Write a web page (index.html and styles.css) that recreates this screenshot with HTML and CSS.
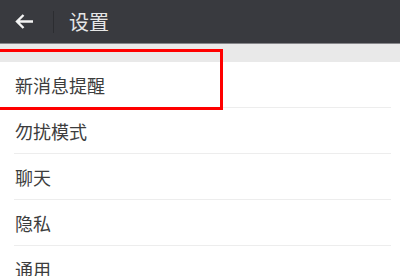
FILE: index.html
```html
<!DOCTYPE html>
<html lang="zh-CN">
<head>
<meta charset="utf-8">
<link rel="stylesheet" href="styles.css">
</head>
<body>
<div class="page">
  <header class="topbar">
    <span class="back">
      <svg width="20" height="17" viewBox="0 0 20 17"><path d="M19 8.5H3M9.5 2L3 8.5l6.5 6.5" fill="none" stroke="#f4f4f4" stroke-width="2.4"/></svg>
    </span>
    <span class="sep"></span>
    <span class="title">设置</span>
  </header>
  <div class="band"></div>
  <ul class="list">
    <li class="row">新消息提醒</li>
    <li class="row">勿扰模式</li>
    <li class="row">聊天</li>
    <li class="row">隐私</li>
    <li class="row">通用</li>
  </ul>
  <div class="highlight"></div>
</div>
</body>
</html>
```
FILE: styles.css
```css
html, body {
  margin: 0;
  padding: 0;
  background: #ffffff;
  overflow: hidden;
}
.page {
  position: relative;
  width: 400px;
  height: 276px;
  overflow: hidden;
  font-family: "Noto Sans CJK SC", "Noto Sans", sans-serif;
}
.topbar {
  height: 43px;
  background: #393a3f;
  border-bottom: 1px solid #86868a;
  display: flex;
  align-items: center;
}
.back {
  width: 20px;
  height: 17px;
  margin-left: 14px;
  display: flex;
}
.sep {
  width: 1px;
  height: 22px;
  background: #2c2d31;
  margin-left: 19px;
}
.title {
  margin-left: 15px;
  font-size: 20px;
  color: #e6e6e6;
  line-height: 1;
  padding-top: 1px;
}
.band {
  height: 18px;
  background: #e9e9e9;
}
.list {
  list-style: none;
  margin: 0;
  padding: 0;
}
.row {
  margin: 0 9px 0 14px;
  padding: 1px 0 0 1px;
  height: 44px;
  border-bottom: 1px solid #ededed;
  display: flex;
  align-items: center;
  font-size: 18px;
  color: #3d3d3d;
}
.highlight {
  position: absolute;
  left: -10px;
  top: 49px;
  width: 227px;
  height: 55px;
  border: 3px solid #ff0000;
}
```
